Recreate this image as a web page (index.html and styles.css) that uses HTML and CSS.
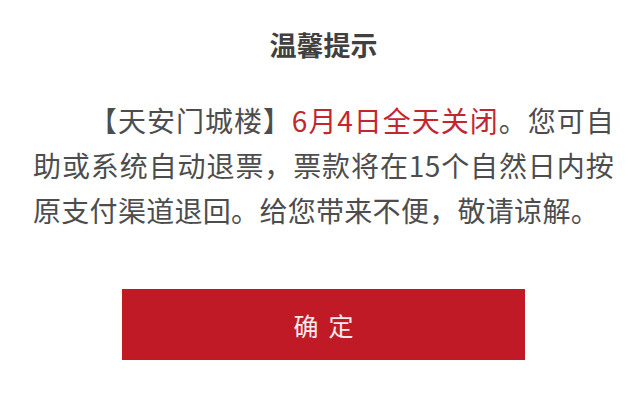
FILE: index.html
```html
<!DOCTYPE html>
<html lang="zh-CN">
<head>
<meta charset="utf-8">
<title>温馨提示</title>
<link rel="stylesheet" href="styles.css">
</head>
<body>
<div class="dialog">
  <h1 class="title">温馨提示</h1>
  <p class="message">【天安门城楼】<span class="alert">6月4日全天关闭</span>。您可自助或系统自动退票，票款将在15个自然日内按原支付渠道退回。给您带来不便，敬请谅解。</p>
  <div class="actions">
    <button class="confirm" type="button">确定</button>
  </div>
</div>
</body>
</html>
```

FILE: styles.css
```css
html, body {
  margin: 0;
  padding: 0;
  background: #ffffff;
}

body {
  width: 631px;
  height: 407px;
  overflow: hidden;
  font-family: "Noto Sans CJK SC", "Noto Sans", sans-serif;
}

.dialog {
  width: 581px;
  padding: 27px 0 0 33px;
}

.title {
  margin: 0;
  font-size: 27px;
  line-height: 36px;
  font-weight: 700;
  color: #404040;
  text-align: center;
}

.message {
  margin: 35px 0 0;
  font-size: 28px;
  line-height: 45px;
  letter-spacing: 0.3px;
  color: #4d4d4d;
  text-indent: 2em;
  text-align: justify;
}

.alert {
  color: #c4262e;
}

.actions {
  margin-top: 56px;
  display: flex;
  justify-content: center;
}

.confirm {
  width: 403px;
  height: 71px;
  border: 0;
  border-radius: 0;
  background: #c01a27;
  color: #fbeaec;
  font-family: "Noto Sans CJK SC", "Noto Sans", sans-serif;
  font-size: 25px;
  letter-spacing: 10px;
  text-indent: 10px;
  padding: 0;
}
```
